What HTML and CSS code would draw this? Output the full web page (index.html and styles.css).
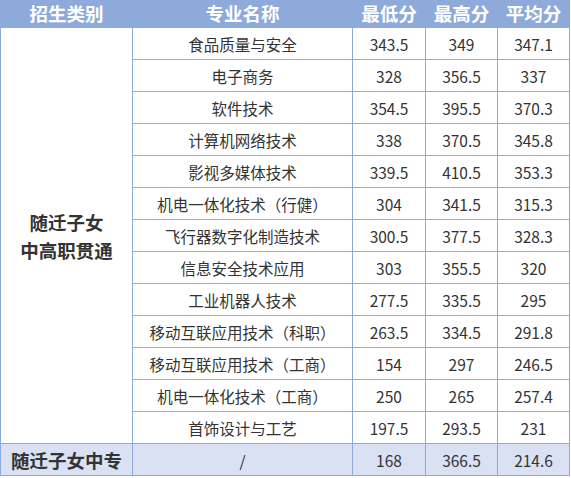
FILE: index.html
```html
<!DOCTYPE html>
<html lang="zh">
<head>
<meta charset="utf-8">
<link rel="stylesheet" href="styles.css">
</head>
<body>
<table class="scores">
  <colgroup>
    <col class="c1"><col class="c2"><col class="c3"><col class="c4"><col class="c5">
  </colgroup>
  <thead>
    <tr><th>招生类别</th><th>专业名称</th><th>最低分</th><th>最高分</th><th>平均分</th></tr>
  </thead>
  <tbody>
    <tr><td class="cat" rowspan="13">随迁子女<br>中高职贯通</td><td>食品质量与安全</td><td>343.5</td><td>349</td><td>347.1</td></tr>
    <tr><td>电子商务</td><td>328</td><td>356.5</td><td>337</td></tr>
    <tr><td>软件技术</td><td>354.5</td><td>395.5</td><td>370.3</td></tr>
    <tr><td>计算机网络技术</td><td>338</td><td>370.5</td><td>345.8</td></tr>
    <tr><td>影视多媒体技术</td><td>339.5</td><td>410.5</td><td>353.3</td></tr>
    <tr><td>机电一体化技术（行健）</td><td>304</td><td>341.5</td><td>315.3</td></tr>
    <tr><td>飞行器数字化制造技术</td><td>300.5</td><td>377.5</td><td>328.3</td></tr>
    <tr><td>信息安全技术应用</td><td>303</td><td>355.5</td><td>320</td></tr>
    <tr><td>工业机器人技术</td><td>277.5</td><td>335.5</td><td>295</td></tr>
    <tr><td>移动互联应用技术（科职）</td><td>263.5</td><td>334.5</td><td>291.8</td></tr>
    <tr><td>移动互联应用技术（工商）</td><td>154</td><td>297</td><td>246.5</td></tr>
    <tr><td>机电一体化技术（工商）</td><td>250</td><td>265</td><td>257.4</td></tr>
    <tr><td>首饰设计与工艺</td><td>197.5</td><td>293.5</td><td>231</td></tr>
    <tr class="alt"><td class="cat">随迁子女中专</td><td>/</td><td>168</td><td>366.5</td><td>214.6</td></tr>
  </tbody>
</table>
</body>
</html>
```

FILE: styles.css
```css
html, body {
  margin: 0;
  padding: 0;
  background: #ffffff;
}

.scores {
  border-collapse: collapse;
  table-layout: fixed;
  width: 569px;
  font-family: "Noto Sans CJK SC", "Noto Sans", sans-serif;
  color: #333333;
}

.c1 { width: 132px; }
.c2 { width: 220px; }
.c3 { width: 73px; }
.c4 { width: 72px; }
.c5 { width: 72px; }

.scores th {
  background: #8eaadb;
  color: #ffffff;
  font-size: 18.5px;
  font-weight: 700;
  height: 27px;
  padding: 0;
  line-height: 27px;
  border: 1px solid #8eaadb;
  border-top: none;
}

.scores td {
  height: 31px;
  padding: 0;
  text-align: center;
  font-size: 15.5px;
  line-height: 20px;
  border: 1px solid #8eaadb;
  white-space: nowrap;
}

.scores td.cat {
  font-size: 18.5px;
  font-weight: 700;
  line-height: 28px;
}

.scores tr.alt td {
  background: #d9e1f2;
}
```
